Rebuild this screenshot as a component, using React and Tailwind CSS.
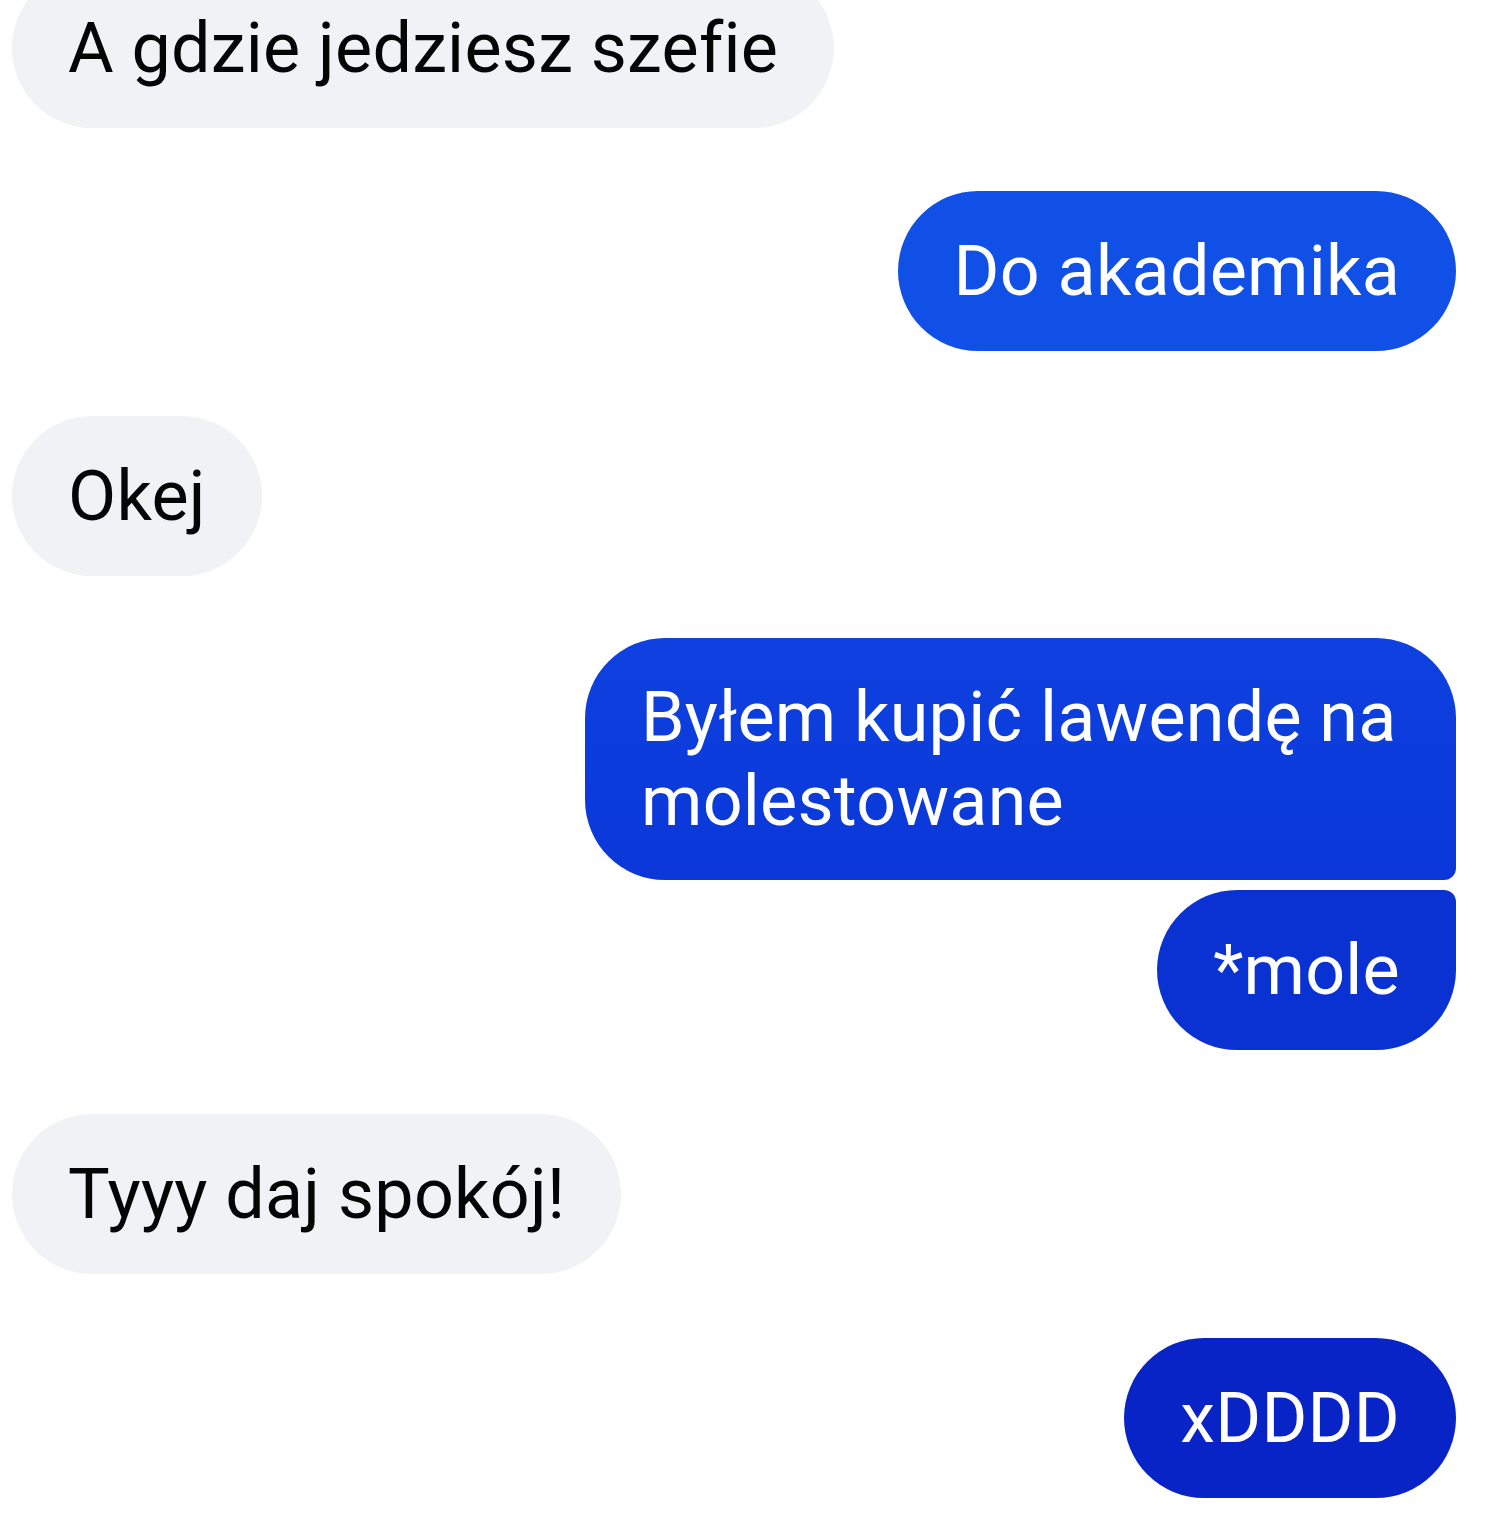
const messages = [
  { id: 1, text: 'A gdzie jedziesz szefie', mine: false, color: '', shape: 'rounded-[80px]', gap: 'mt-[-32px]', pad: 'py-[38px]' },
  { id: 2, text: 'Do akademika', mine: true, color: 'bg-[#1150e7]', shape: 'rounded-[80px]', gap: 'mt-[63px]', pad: 'py-[38px]' },
  { id: 3, text: 'Okej', mine: false, color: '', shape: 'rounded-[80px]', gap: 'mt-[65px]', pad: 'py-[38px]' },
  {
    id: 4,
    text: 'Byłem kupić lawendę na molestowane',
    mine: true,
    color: 'bg-gradient-to-b from-[#0e41e0] to-[#0b37d8]',
    shape: 'rounded-tl-[80px] rounded-tr-[80px] rounded-bl-[80px] rounded-br-[12px]',
    gap: 'mt-[62px]',
    pad: 'py-[37px]',
  },
  {
    id: 5,
    text: '*mole',
    mine: true,
    color: 'bg-[#0a32d3]',
    shape: 'rounded-tl-[80px] rounded-tr-[12px] rounded-bl-[80px] rounded-br-[80px]',
    gap: 'mt-[10px]',
    pad: 'py-[38px]',
  },
  { id: 6, text: 'Tyyy daj spokój!', mine: false, color: '', shape: 'rounded-[80px]', gap: 'mt-[64px]', pad: 'py-[38px]' },
  { id: 7, text: 'xDDDD', mine: true, color: 'bg-[#0824c7]', shape: 'rounded-[80px]', gap: 'mt-[64px]', pad: 'py-[38px]' },
];

function Bubble({ msg }) {
  return (
    <div className={`flex ${msg.mine ? 'justify-end' : 'justify-start'} ${msg.gap}`}>
      <div
        className={`${msg.shape} ${
          msg.mine ? `${msg.color} text-white max-w-[871px]` : 'bg-[#f1f2f6] text-[#050505]'
        } px-[56px] ${msg.pad} text-[70px] leading-[84px] tracking-[0.25px]`}
      >
        {msg.text}
      </div>
    </div>
  );
}

export default function App() {
  return (
    <div className="min-h-[1536px] overflow-hidden bg-white pl-[12px] pr-[37px] font-['Roboto',sans-serif]">
      {messages.map((msg) => (
        <Bubble key={msg.id} msg={msg} />
      ))}
    </div>
  );
}
